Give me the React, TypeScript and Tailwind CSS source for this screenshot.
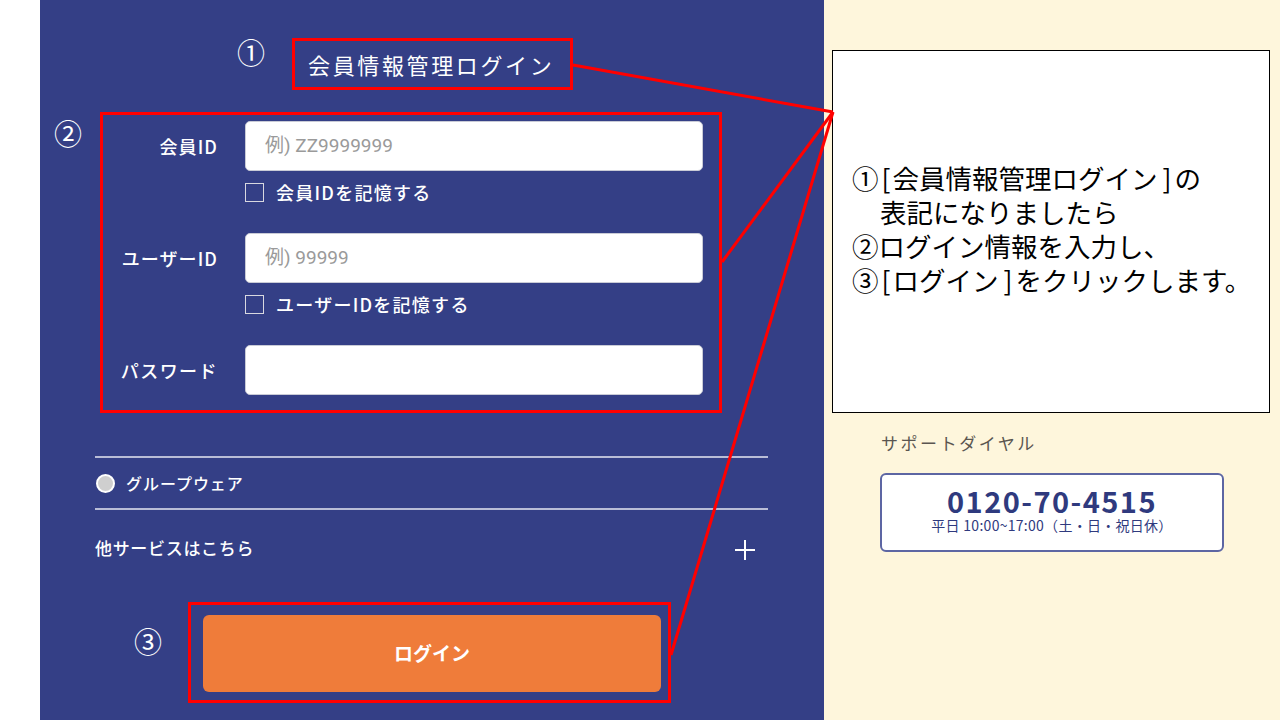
export default function App() {
  const bl = "inline-block pl-[3px] pr-[2px] leading-[34px]";
  const br = "inline-block pl-[5px] pr-[3px] leading-[34px]";
  return (
    <div className="relative flex h-[720px] w-[1280px] overflow-hidden bg-white font-['Noto_Sans_CJK_JP','Noto_Sans',sans-serif]">
      <div className="w-[40px] shrink-0 bg-white" />
      <div className="flex w-[784px] shrink-0 flex-col bg-[#343f86] text-white">
        {/* Row 1 */}
        <div className="flex pl-[197px] pt-[38px]">
          <span className="mt-[-1px] w-[55px] text-[28px] leading-[30px]">①</span>
          <div className="flex h-[52px] w-[281px] items-center border-[3px] border-[#ff0000] pl-[13px] text-[22px] font-normal tracking-[0.12em]">
            会員情報管理ログイン
          </div>
        </div>
        {/* Row 2 form */}
        <div className="mt-[22px] flex pl-[14px]">
          <span className="mt-[6px] w-[46px] text-[28px] leading-[30px]">②</span>
          <div className="flex h-[301px] w-[622px] flex-col border-[3px] border-[#ff0000] pr-[16px] pt-[6px]">
            <div className="grid grid-cols-[115px_458px] gap-x-[27px]">
              <label className="self-center text-right text-[18px] font-medium tracking-[0.06em]">会員ID</label>
              <div className="flex h-[50px] items-center rounded-[5px] border border-[#c9cbd6] bg-white pl-[19px] font-['Roboto','Noto_Sans_CJK_JP',sans-serif] text-[19px] text-[#9a9a9a]">
                例) ZZ9999999
              </div>
              <div className="col-start-2 mt-[9px] flex h-[24px] items-center gap-[12px]">
                <span className="h-[19px] w-[19px] border-[1.5px] border-[#d8d8e0]" />
                <span className="text-[18px] font-medium tracking-[0.07em]">会員IDを記憶する</span>
              </div>
            </div>
            <div className="mt-[29px] grid grid-cols-[115px_458px] gap-x-[27px]">
              <label className="self-center text-right text-[18px] font-medium tracking-[0.06em]">ユーザーID</label>
              <div className="flex h-[50px] items-center rounded-[5px] border border-[#c9cbd6] bg-white pl-[19px] font-['Roboto','Noto_Sans_CJK_JP',sans-serif] text-[19px] text-[#9a9a9a]">
                例) 99999
              </div>
              <div className="col-start-2 mt-[9px] flex h-[24px] items-center gap-[12px]">
                <span className="h-[19px] w-[19px] border-[1.5px] border-[#d8d8e0]" />
                <span className="text-[18px] font-medium tracking-[0.07em]">ユーザーIDを記憶する</span>
              </div>
            </div>
            <div className="mt-[29px] grid grid-cols-[115px_458px] gap-x-[27px]">
              <label className="self-center text-right text-[18px] font-medium tracking-[0.08em]">パスワード</label>
              <div className="h-[50px] rounded-[5px] border border-[#c9cbd6] bg-white" />
            </div>
          </div>
        </div>
        {/* Dividers */}
        <div className="ml-[55px] mt-[43px] w-[673px]">
          <div className="h-[2px] bg-[#b9bdd6]" />
          <div className="flex h-[50px] items-center gap-[11px] pl-[1px]">
            <span className="h-[19px] w-[19px] rounded-full border-2 border-white bg-[#cfcfcf]" />
            <span className="text-[16px] font-medium tracking-[0.06em]">グループウェア</span>
          </div>
          <div className="h-[2px] bg-[#b9bdd6]" />
          <div className="flex h-[76px] items-center justify-between pr-[11px]">
            <span className="text-[17px] font-medium tracking-[0.04em]">他サービスはこちら</span>
            <svg width="24" height="24" viewBox="0 0 24 24" className="mt-[4px]">
              <path d="M12 2v20M2 12h20" stroke="white" strokeWidth="2" />
            </svg>
          </div>
        </div>
        {/* Row 3 button */}
        <div className="mt-[16px] flex pl-[94px]">
          <span className="mt-[24px] w-[54px] text-[28px] leading-[30px]">③</span>
          <div className="h-[101px] w-[483px] border-[3px] border-[#ff0000] pb-[8px] pl-[12px] pr-[7px] pt-[10px]">
            <button className="flex h-[77px] w-full items-center justify-center rounded-[6px] bg-[#ef7c3a] text-[19px] font-bold text-white">
              ログイン
            </button>
          </div>
        </div>
      </div>
      <div className="flex-1 bg-[#fef6dc] pl-[8px] pt-[50px]">
        <div className="h-[363px] w-[438px] border border-black bg-white pl-[19px] pt-[110px] text-[26.5px] leading-[34px] text-black">
          <div>①<span className={bl}>[</span>会員情報管理ログイン<span className={br}>]</span>の</div>
          <div className="pl-[28px]">表記になりましたら</div>
          <div>②ログイン情報を入力し、</div>
          <div>③<span className={bl}>[</span>ログイン<span className={br}>]</span>をクリックします。</div>
        </div>
        <div className="ml-[49px] mt-[18px] text-[17px] leading-[24px] tracking-[0.15em] text-[#5a5550]">サポートダイヤル</div>
        <div className="ml-[48px] mt-[18px] flex h-[79px] w-[344px] flex-col items-center rounded-[6px] border-2 border-[#5d66a3] bg-white pt-[9px] text-[#2f3a7e]">
          <div className="text-[29px] font-bold leading-[32px] tracking-[0.05em]">0120-70-4515</div>
          <div className="text-[14px] leading-[18px] tracking-[0.02em]">平日 10:00~17:00（土・日・祝日休）</div>
        </div>
      </div>
      <svg className="pointer-events-none absolute inset-0" width="1280" height="720">
        <line x1="573" y1="65" x2="833" y2="112" stroke="#ff0000" strokeWidth="3" />
        <line x1="722" y1="262" x2="833" y2="112" stroke="#ff0000" strokeWidth="3" />
        <line x1="671" y1="655" x2="833" y2="112" stroke="#ff0000" strokeWidth="3" />
      </svg>
    </div>
  );
}
